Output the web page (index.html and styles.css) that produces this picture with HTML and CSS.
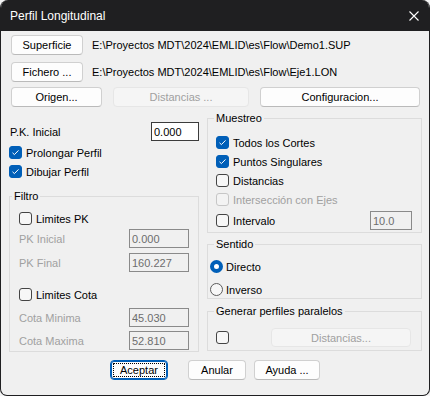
FILE: index.html
```html
<!DOCTYPE html>
<html lang="es">
<head>
  <meta charset="UTF-8" />
  <title>Perfil Longitudinal</title>
  <link rel="stylesheet" href="styles.css">
</head>
<body>
<div class="window">
  <div class="titlebar">
    <span class="title">Perfil Longitudinal</span>
    <svg class="close" width="10" height="10" viewBox="0 0 10 10"><path d="M0.5 0.5L9.5 9.5M9.5 0.5L0.5 9.5" stroke="#fff" stroke-width="1.1"/></svg>
  </div>

  <div class="dialog">
    <div class="file-row">
      <button class="btn btn-file">Superficie</button>
      <span class="path">E:\Proyectos MDT\2024\EMLID\es\Flow\Demo1.SUP</span>
    </div>
    <div class="file-row">
      <button class="btn btn-file">Fichero ...</button>
      <span class="path">E:\Proyectos MDT\2024\EMLID\es\Flow\Eje1.LON</span>
    </div>
    <div class="action-row">
      <button class="btn btn-origen">Origen...</button>
      <button class="btn btn-dist" disabled>Distancias ...</button>
      <button class="btn btn-config">Configuracion...</button>
    </div>

    <div class="main">
      <!-- columna izquierda -->
      <div class="left">
        <div class="pk-row">
          <span>P.K. Inicial</span>
          <input class="field pk-field" type="text" value="0.000">
        </div>
        <div class="check-row first">
          <span class="box checked"><svg width="13" height="13" viewBox="0 0 13 13"><path d="M3.5 6.8L5.4 8.6L9.5 4.4" fill="none" stroke="#fff" stroke-width="1"/></svg></span>
          <span>Prolongar Perfil</span>
        </div>
        <div class="check-row">
          <span class="box checked"><svg width="13" height="13" viewBox="0 0 13 13"><path d="M3.5 6.8L5.4 8.6L9.5 4.4" fill="none" stroke="#fff" stroke-width="1"/></svg></span>
          <span>Dibujar Perfil</span>
        </div>

        <fieldset class="group filtro">
          <legend>Filtro</legend>
          <div class="group-body">
            <div class="check-row">
              <span class="box"></span>
              <span>Limites PK</span>
            </div>
            <div class="field-row pk-ini">
              <span class="muted">PK Inicial</span>
              <input class="field off" type="text" value="0.000" disabled>
            </div>
            <div class="field-row pk-fin">
              <span class="muted">PK Final</span>
              <input class="field off" type="text" value="160.227" disabled>
            </div>
            <div class="check-row cota">
              <span class="box"></span>
              <span>Limites Cota</span>
            </div>
            <div class="field-row cota-min">
              <span class="muted">Cota Minima</span>
              <input class="field off" type="text" value="45.030" disabled>
            </div>
            <div class="field-row cota-max">
              <span class="muted">Cota Maxima</span>
              <input class="field off" type="text" value="52.810" disabled>
            </div>
          </div>
        </fieldset>
      </div>

      <!-- columna derecha -->
      <div class="right">
        <fieldset class="group muestreo">
          <legend>Muestreo</legend>
          <div class="group-body">
            <div class="check-row">
              <span class="box checked"><svg width="13" height="13" viewBox="0 0 13 13"><path d="M3.5 6.8L5.4 8.6L9.5 4.4" fill="none" stroke="#fff" stroke-width="1"/></svg></span>
              <span>Todos los Cortes</span>
            </div>
            <div class="check-row">
              <span class="box checked"><svg width="13" height="13" viewBox="0 0 13 13"><path d="M3.5 6.8L5.4 8.6L9.5 4.4" fill="none" stroke="#fff" stroke-width="1"/></svg></span>
              <span>Puntos Singulares</span>
            </div>
            <div class="check-row">
              <span class="box"></span>
              <span>Distancias</span>
            </div>
            <div class="check-row">
              <span class="box disabled"></span>
              <span class="muted">Intersección con Ejes</span>
            </div>
            <div class="check-row intervalo">
              <span class="box"></span>
              <span>Intervalo</span>
              <input class="field off small" type="text" value="10.0" disabled>
            </div>
          </div>
        </fieldset>

        <fieldset class="group sentido">
          <legend>Sentido</legend>
          <div class="group-body">
            <div class="radio-row">
              <span class="radio on"></span>
              <span>Directo</span>
            </div>
            <div class="radio-row">
              <span class="radio"></span>
              <span>Inverso</span>
            </div>
          </div>
        </fieldset>

        <fieldset class="group generar">
          <legend>Generar perfiles paralelos</legend>
          <div class="group-body">
            <span class="box"></span>
            <button class="btn btn-dist btn-par" disabled>Distancias...</button>
          </div>
        </fieldset>
      </div>
    </div>

    <div class="footer">
      <button class="btn btn-ok">Aceptar</button>
      <button class="btn btn-cancel">Anular</button>
      <button class="btn btn-help">Ayuda ...</button>
    </div>
  </div>
</div>
</body>
</html>
```

FILE: styles.css
```css
* {
  box-sizing: border-box;
}
html, body {
  margin: 0;
  padding: 0;
}
body {
  background: #f4f4f4;
  font-family: 'Liberation Sans', Arial, sans-serif;
  font-size: 11px;
  color: #000;
}
.window {
  width: 430px;
  height: 396px;
  background: #f0f0f0;
  border: 1px solid #1f1f21;
  border-top: 0;
  border-radius: 8px 8px 7px 7px;
  overflow: hidden;
  display: flex;
  flex-direction: column;
}
.titlebar {
  height: 31px;
  flex: none;
  background: #1f1f21;
  color: #fff;
  display: flex;
  align-items: center;
  justify-content: space-between;
  padding: 0 10px 0 9px;
  font-size: 12px;
}
.dialog {
  flex: 1;
  padding: 4px 7px 0 8px;
}
.btn {
  height: 20px;
  padding: 0;
  background: #fdfdfd;
  border: 1px solid #d0d0d0;
  border-bottom-color: #bababa;
  border-radius: 4px;
  font: inherit;
  color: #000;
}
.btn:disabled {
  background: #f5f5f5;
  border-color: #e6e6e6;
  color: #a0a0a0;
}
.file-row {
  display: flex;
  align-items: center;
  gap: 9px;
  height: 20px;
  padding-left: 2px;
}
.file-row + .file-row {
  margin-top: 7px;
}
.btn-file {
  width: 72px;
}
.action-row {
  display: flex;
  gap: 11px;
  margin-top: 5px;
  padding: 0 2px;
}
.btn-origen {
  width: 91px;
}
.btn-dist {
  width: 136px;
}
.btn-config {
  width: 160px;
}
.main {
  display: grid;
  grid-template-columns: 190px 215px;
  column-gap: 8px;
  margin-top: 4px;
}
.pk-row {
  display: flex;
  justify-content: space-between;
  align-items: center;
  height: 19px;
  margin-top: 11px;
  padding-left: 1px;
}
.field {
  height: 19px;
  margin: 0;
  padding: 0 2px;
  border: 1px solid #3c3c3c;
  background: #fff;
  font: inherit;
  color: #000;
  outline: none;
}
.pk-field {
  width: 48px;
}
.field.off {
  width: 60px;
  background: #f0f0f0;
  border-color: #8a8a8a;
  color: #6d6d6d;
}
.field.small {
  width: 42px;
  margin-left: auto;
}
.check-row {
  display: flex;
  align-items: center;
  gap: 4px;
  height: 19px;
}
.check-row.first {
  margin-top: 2px;
}
.box {
  width: 13px;
  height: 13px;
  flex: none;
  border: 1px solid #444;
  border-radius: 3px;
  background: #f7f7f7;
}
.box svg {
  display: block;
  margin: -1px;
}
.box.checked {
  background: #005fb8;
  border-color: #005fb8;
}
.box.disabled {
  border-color: #c6c6c6;
  background: #f3f3f3;
}
.muted {
  color: #a0a0a0;
}
.radio-row {
  display: flex;
  align-items: center;
  gap: 3px;
  height: 17px;
}
.radio-row + .radio-row {
  margin-top: 6px;
}
.radio {
  width: 13px;
  height: 13px;
  border: 1px solid #5c5c5c;
  border-radius: 50%;
  background: #f7f7f7;
}
.radio.on {
  border: 4px solid #005fb8;
  background: #fff;
}
/* Group boxes */
.group {
  margin: 0;
  padding: 0;
  min-width: 0;
  border: 1px solid #dcdcdc;
}
.group legend {
  line-height: 14px;
  padding: 0 2px;
  margin-left: 2px;
}
.filtro {
  margin-top: 8px;
}
.filtro .group-body {
  padding: 6px 9px 1px 9px;
}
.field-row {
  display: flex;
  justify-content: space-between;
  align-items: center;
  height: 19px;
}
.pk-ini {
  margin-top: 1px;
}
.pk-fin {
  margin-top: 5px;
}
.check-row.cota {
  margin-top: 13px;
}
.cota-min, .cota-max {
  margin-top: 4px;
}
.right .group legend {
  margin-left: 6px;
}
.muestreo .group-body {
  padding: 8px 9px 2px 8px;
}
.check-row.intervalo {
  margin-top: 2px;
}
.sentido {
  margin-top: 4px;
}
.sentido .group-body {
  padding: 7px 0 0 2px;
}
.generar {
  margin-top: 5px;
}
.generar .group-body {
  display: flex;
  align-items: center;
  justify-content: space-between;
  height: 32px;
  padding: 10px 10px 3px 8px;
}
.btn-par {
  width: 140px;
  height: 19px;
}
.footer {
  display: flex;
  margin-top: 8px;
  padding-left: 101px;
}
.btn-ok {
  width: 58px;
  border: 1px solid #005fb8;
  box-shadow: inset 0 0 0 1px #005fb8;
  outline: 1px dotted #000;
  outline-offset: -4px;
}
.btn-cancel {
  width: 58px;
  margin-left: 20px;
}
.btn-help {
  width: 66px;
  margin-left: 8px;
}
```
